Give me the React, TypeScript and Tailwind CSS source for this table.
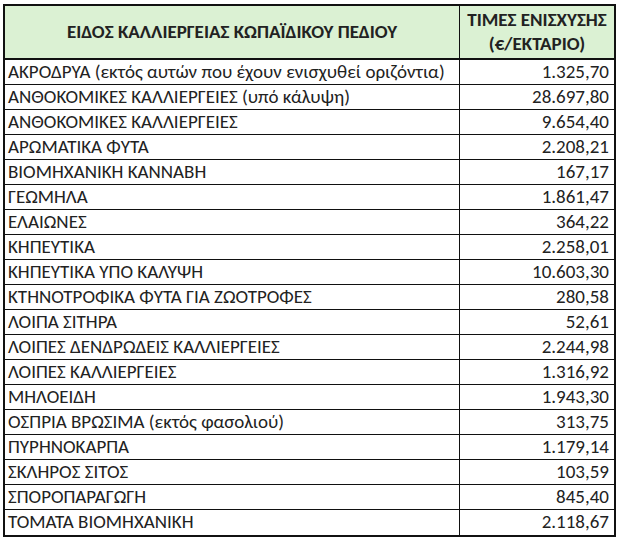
const rows: [string, string][] = [
  ["ΑΚΡΟΔΡΥΑ (εκτός αυτών που έχουν ενισχυθεί οριζόντια)", "1.325,70"],
  ["ΑΝΘΟΚΟΜΙΚΕΣ ΚΑΛΛΙΕΡΓΕΙΕΣ (υπό κάλυψη)", "28.697,80"],
  ["ΑΝΘΟΚΟΜΙΚΕΣ ΚΑΛΛΙΕΡΓΕΙΕΣ", "9.654,40"],
  ["ΑΡΩΜΑΤΙΚΑ ΦΥΤΑ", "2.208,21"],
  ["ΒΙΟΜΗΧΑΝΙΚΗ ΚΑΝΝΑΒΗ", "167,17"],
  ["ΓΕΩΜΗΛΑ", "1.861,47"],
  ["ΕΛΑΙΩΝΕΣ", "364,22"],
  ["ΚΗΠΕΥΤΙΚΑ", "2.258,01"],
  ["ΚΗΠΕΥΤΙΚΑ ΥΠΟ ΚΑΛΥΨΗ", "10.603,30"],
  ["ΚΤΗΝΟΤΡΟΦΙΚΑ ΦΥΤΑ ΓΙΑ ΖΩΟΤΡΟΦΕΣ", "280,58"],
  ["ΛΟΙΠΑ ΣΙΤΗΡΑ", "52,61"],
  ["ΛΟΙΠΕΣ ΔΕΝΔΡΩΔΕΙΣ ΚΑΛΛΙΕΡΓΕΙΕΣ", "2.244,98"],
  ["ΛΟΙΠΕΣ ΚΑΛΛΙΕΡΓΕΙΕΣ", "1.316,92"],
  ["ΜΗΛΟΕΙΔΗ", "1.943,30"],
  ["ΟΣΠΡΙΑ ΒΡΩΣΙΜΑ (εκτός φασολιού)", "313,75"],
  ["ΠΥΡΗΝΟΚΑΡΠΑ", "1.179,14"],
  ["ΣΚΛΗΡΟΣ ΣΙΤΟΣ", "103,59"],
  ["ΣΠΟΡΟΠΑΡΑΓΩΓΗ", "845,40"],
  ["ΤΟΜΑΤΑ ΒΙΟΜΗΧΑΝΙΚΗ", "2.118,67"],
];

export default function App() {
  return (
    <div className="w-[621px] h-[540px] bg-white pt-[4px] pl-[3px] font-['Carlito','Liberation_Sans_Narrow','Liberation_Sans',sans-serif] text-[#222]">
      <div className="w-[613px] border-2 border-[#111]">
        <div className="flex h-[54px] bg-[#dbf1d3] border-b-2 border-[#111] font-bold">
          <div className="w-[455px] flex items-center justify-center text-[19px] border-r border-[#111]">
            ΕΙΔΟΣ ΚΑΛΛΙΕΡΓΕΙΑΣ ΚΩΠΑΪΔΙΚΟΥ ΠΕΔΙΟΥ
          </div>
          <div className="flex-1 flex flex-col items-center justify-center text-[19px] leading-[24px]">
            <span>ΤΙΜΕΣ ΕΝΙΣΧΥΣΗΣ</span>
            <span>(€/ΕΚΤΑΡΙΟ)</span>
          </div>
        </div>
        {rows.map(([name, value], i) => (
          <div
            key={name}
            className={`flex h-[25px] text-[19px] leading-[24px] ${i < rows.length - 1 ? "border-b border-[#111]" : ""}`}
          >
            <div className="w-[455px] pl-[3px] border-r border-[#111] whitespace-nowrap">{name}</div>
            <div className="flex-1 pr-[5px] text-right">{value}</div>
          </div>
        ))}
      </div>
    </div>
  );
}
